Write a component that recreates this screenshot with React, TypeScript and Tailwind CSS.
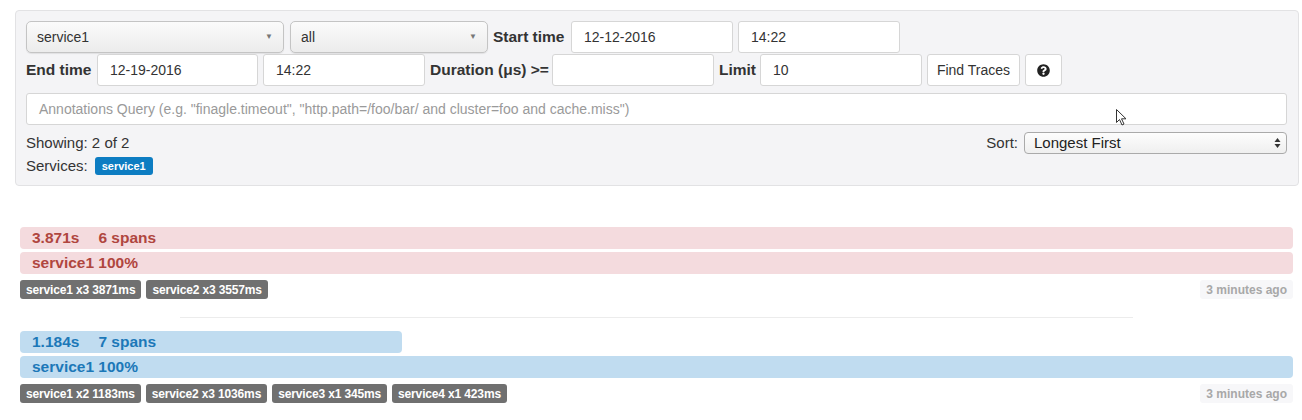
import React from "react";
import { FaQuestionCircle } from "react-icons/fa";

const font = { fontFamily: '"Liberation Sans", Arial, Helvetica, sans-serif' };

function Select({ w, text }: { w: string; text: string }) {
  return (
    <div
      className={`${w} h-[32px] flex items-center justify-between rounded-[5px] border border-[#c4c4c4] bg-gradient-to-b from-[#fbfbfb] to-[#ececec] pl-[10px] pr-[10px] text-[14px] text-[#333] shadow-[0_1px_1px_rgba(0,0,0,0.08)]`}
    >
      <span>{text}</span>
      <span className="text-[8px] text-[#777]">▼</span>
    </div>
  );
}

function Input({ w, text }: { w: string; text?: string }) {
  return (
    <div
      className={`${w} h-[32px] flex items-center rounded-[3px] border border-[#d6d6d6] bg-white pl-[12px] text-[14px] text-[#333]`}
    >
      {text}
    </div>
  );
}

function Label({ w, children }: { w: string; children: React.ReactNode }) {
  return (
    <span className={`${w} text-[15.5px] font-bold text-[#333] whitespace-nowrap`}>{children}</span>
  );
}

function Tag({ children }: { children: React.ReactNode }) {
  return (
    <span className="h-[19px] flex items-center rounded-[3px] bg-[#707070] px-[6px] text-[12px] font-bold tracking-[-0.15px] text-white whitespace-nowrap">
      {children}
    </span>
  );
}

function Trace({
  kind,
  duration,
  spans,
  topWidth,
  tags,
}: {
  kind: "red" | "blue";
  duration: string;
  spans: string;
  topWidth?: number;
  tags: string[];
}) {
  const bar =
    kind === "red"
      ? "bg-[#f4dbde] text-[#b0463f]"
      : "bg-[#c0dcf0] text-[#1c78b8]";
  return (
    <div className="flex flex-col">
      <div
        className={`${bar} h-[22px] rounded-[4px] flex items-center pl-[12px] text-[15.5px] font-bold`}
        style={topWidth ? { width: topWidth } : undefined}
      >
        <span>{duration}</span>
        <span className="ml-[19px]">{spans}</span>
      </div>
      <div className={`${bar} mt-[3px] h-[22px] rounded-[4px] flex items-center pl-[12px] text-[15.5px] font-bold`}>
        service1 100%
      </div>
      <div className="mt-[6px] flex items-center justify-between">
        <div className="flex gap-[5px]">
          {tags.map((t) => (
            <Tag key={t}>{t}</Tag>
          ))}
        </div>
        <span className="h-[19px] flex items-center rounded-[3px] bg-[#f7f7f9] px-[6px] text-[12px] font-bold text-[#a8a8a8]">
          3 minutes ago
        </span>
      </div>
    </div>
  );
}

export default function App() {
  return (
    <div className="relative w-[1302px] h-[420px] bg-white overflow-hidden" style={font}>
      <div className="ml-[15px] mt-[10px] w-[1284px] rounded-[4px] border border-[#e2e2e4] bg-[#f4f4f6] pl-[10px] pr-[11px] pt-[10px] pb-[10px]">
        {/* Row 1 */}
        <div className="flex h-[32px] items-center gap-[5px]">
          <Select w="w-[258px]" text="service1" />
          <div className="ml-[1px]">
            <Select w="w-[198px]" text="all" />
          </div>
          <Label w="w-[73px]">Start time</Label>
          <Input w="w-[162px]" text="12-12-2016" />
          <Input w="w-[162px]" text="14:22" />
        </div>
        {/* Row 2 */}
        <div className="mt-[1px] flex h-[32px] items-center gap-[5px]">
          <Label w="w-[66px]">End time</Label>
          <Input w="w-[161px]" text="12-19-2016" />
          <Input w="w-[162px]" text="14:22" />
          <Label w="w-[117px]">Duration (μs) &gt;=</Label>
          <Input w="w-[162px]" />
          <Label w="w-[36px]">Limit</Label>
          <Input w="w-[162px]" text="10" />
          <div className="h-[32px] w-[93px] flex items-center justify-center rounded-[3px] border border-[#d6d6d6] bg-white text-[14px] text-[#333]">
            Find Traces
          </div>
          <div className="h-[32px] w-[37px] flex items-center justify-center rounded-[3px] border border-[#d6d6d6] bg-white text-[#222]">
            <FaQuestionCircle size={13} />
          </div>
        </div>
        {/* Row 3 */}
        <div className="mt-[7px] h-[32px] w-[1261px] flex items-center rounded-[3px] border border-[#d6d6d6] bg-white pl-[12px] text-[14px] text-[#9a9a9a]">
          Annotations Query (e.g. "finagle.timeout", "http.path=/foo/bar/ and cluster=foo and cache.miss")
        </div>
        {/* Row 4 */}
        <div className="mt-[7px] flex h-[22px] w-[1261px] items-center justify-between">
          <span className="text-[15px] text-[#333]">Showing: 2 of 2</span>
          <div className="flex items-center gap-[6px]">
            <span className="text-[15px] text-[#333]">Sort:</span>
            <div className="h-[22px] w-[263px] flex items-center justify-between rounded-[4px] border border-[#aaaaaa] bg-gradient-to-b from-[#fdfdfd] to-[#efefef] pl-[9px] pr-[5px] text-[15px] text-[#222]">
              <span>Longest First</span>
              <svg width="7" height="12" viewBox="0 0 7 12">
                <path d="M3.5 1 L6.5 5 L0.5 5 Z" fill="#333" />
                <path d="M3.5 11 L6.5 7 L0.5 7 Z" fill="#333" />
              </svg>
            </div>
          </div>
        </div>
        {/* Row 5 */}
        <div className="mt-[3px] flex h-[18px] items-center gap-[7px]">
          <span className="text-[15px] text-[#333]">Services:</span>
          <span className="h-[18px] w-[58px] flex items-center justify-center rounded-[3px] bg-[#0d7dc2] text-[11px] font-bold text-white">
            service1
          </span>
        </div>
      </div>

      <div className="ml-[20px] mr-[9px] mt-[41px]">
        <Trace
          kind="red"
          duration="3.871s"
          spans="6 spans"
          tags={["service1 x3 3871ms", "service2 x3 3557ms"]}
        />
        <div className="ml-[160px] mr-[160px] mt-[18px] h-px bg-[#ececec]" />
        <div className="mt-[13px]">
          <Trace
            kind="blue"
            duration="1.184s"
            spans="7 spans"
            topWidth={382}
            tags={["service1 x2 1183ms", "service2 x3 1036ms", "service3 x1 345ms", "service4 x1 423ms"]}
          />
        </div>
      </div>

      {/* mouse cursor */}
      <svg className="absolute left-[1116px] top-[109px]" width="11" height="17" viewBox="0 0 11 17">
        <path d="M0.5 0.5 L0.5 13.5 L3.5 10.5 L6 16 L8 15 L5.5 9.8 L10 9.8 Z" fill="#fff" stroke="#333" strokeWidth="1" />
      </svg>
    </div>
  );
}
